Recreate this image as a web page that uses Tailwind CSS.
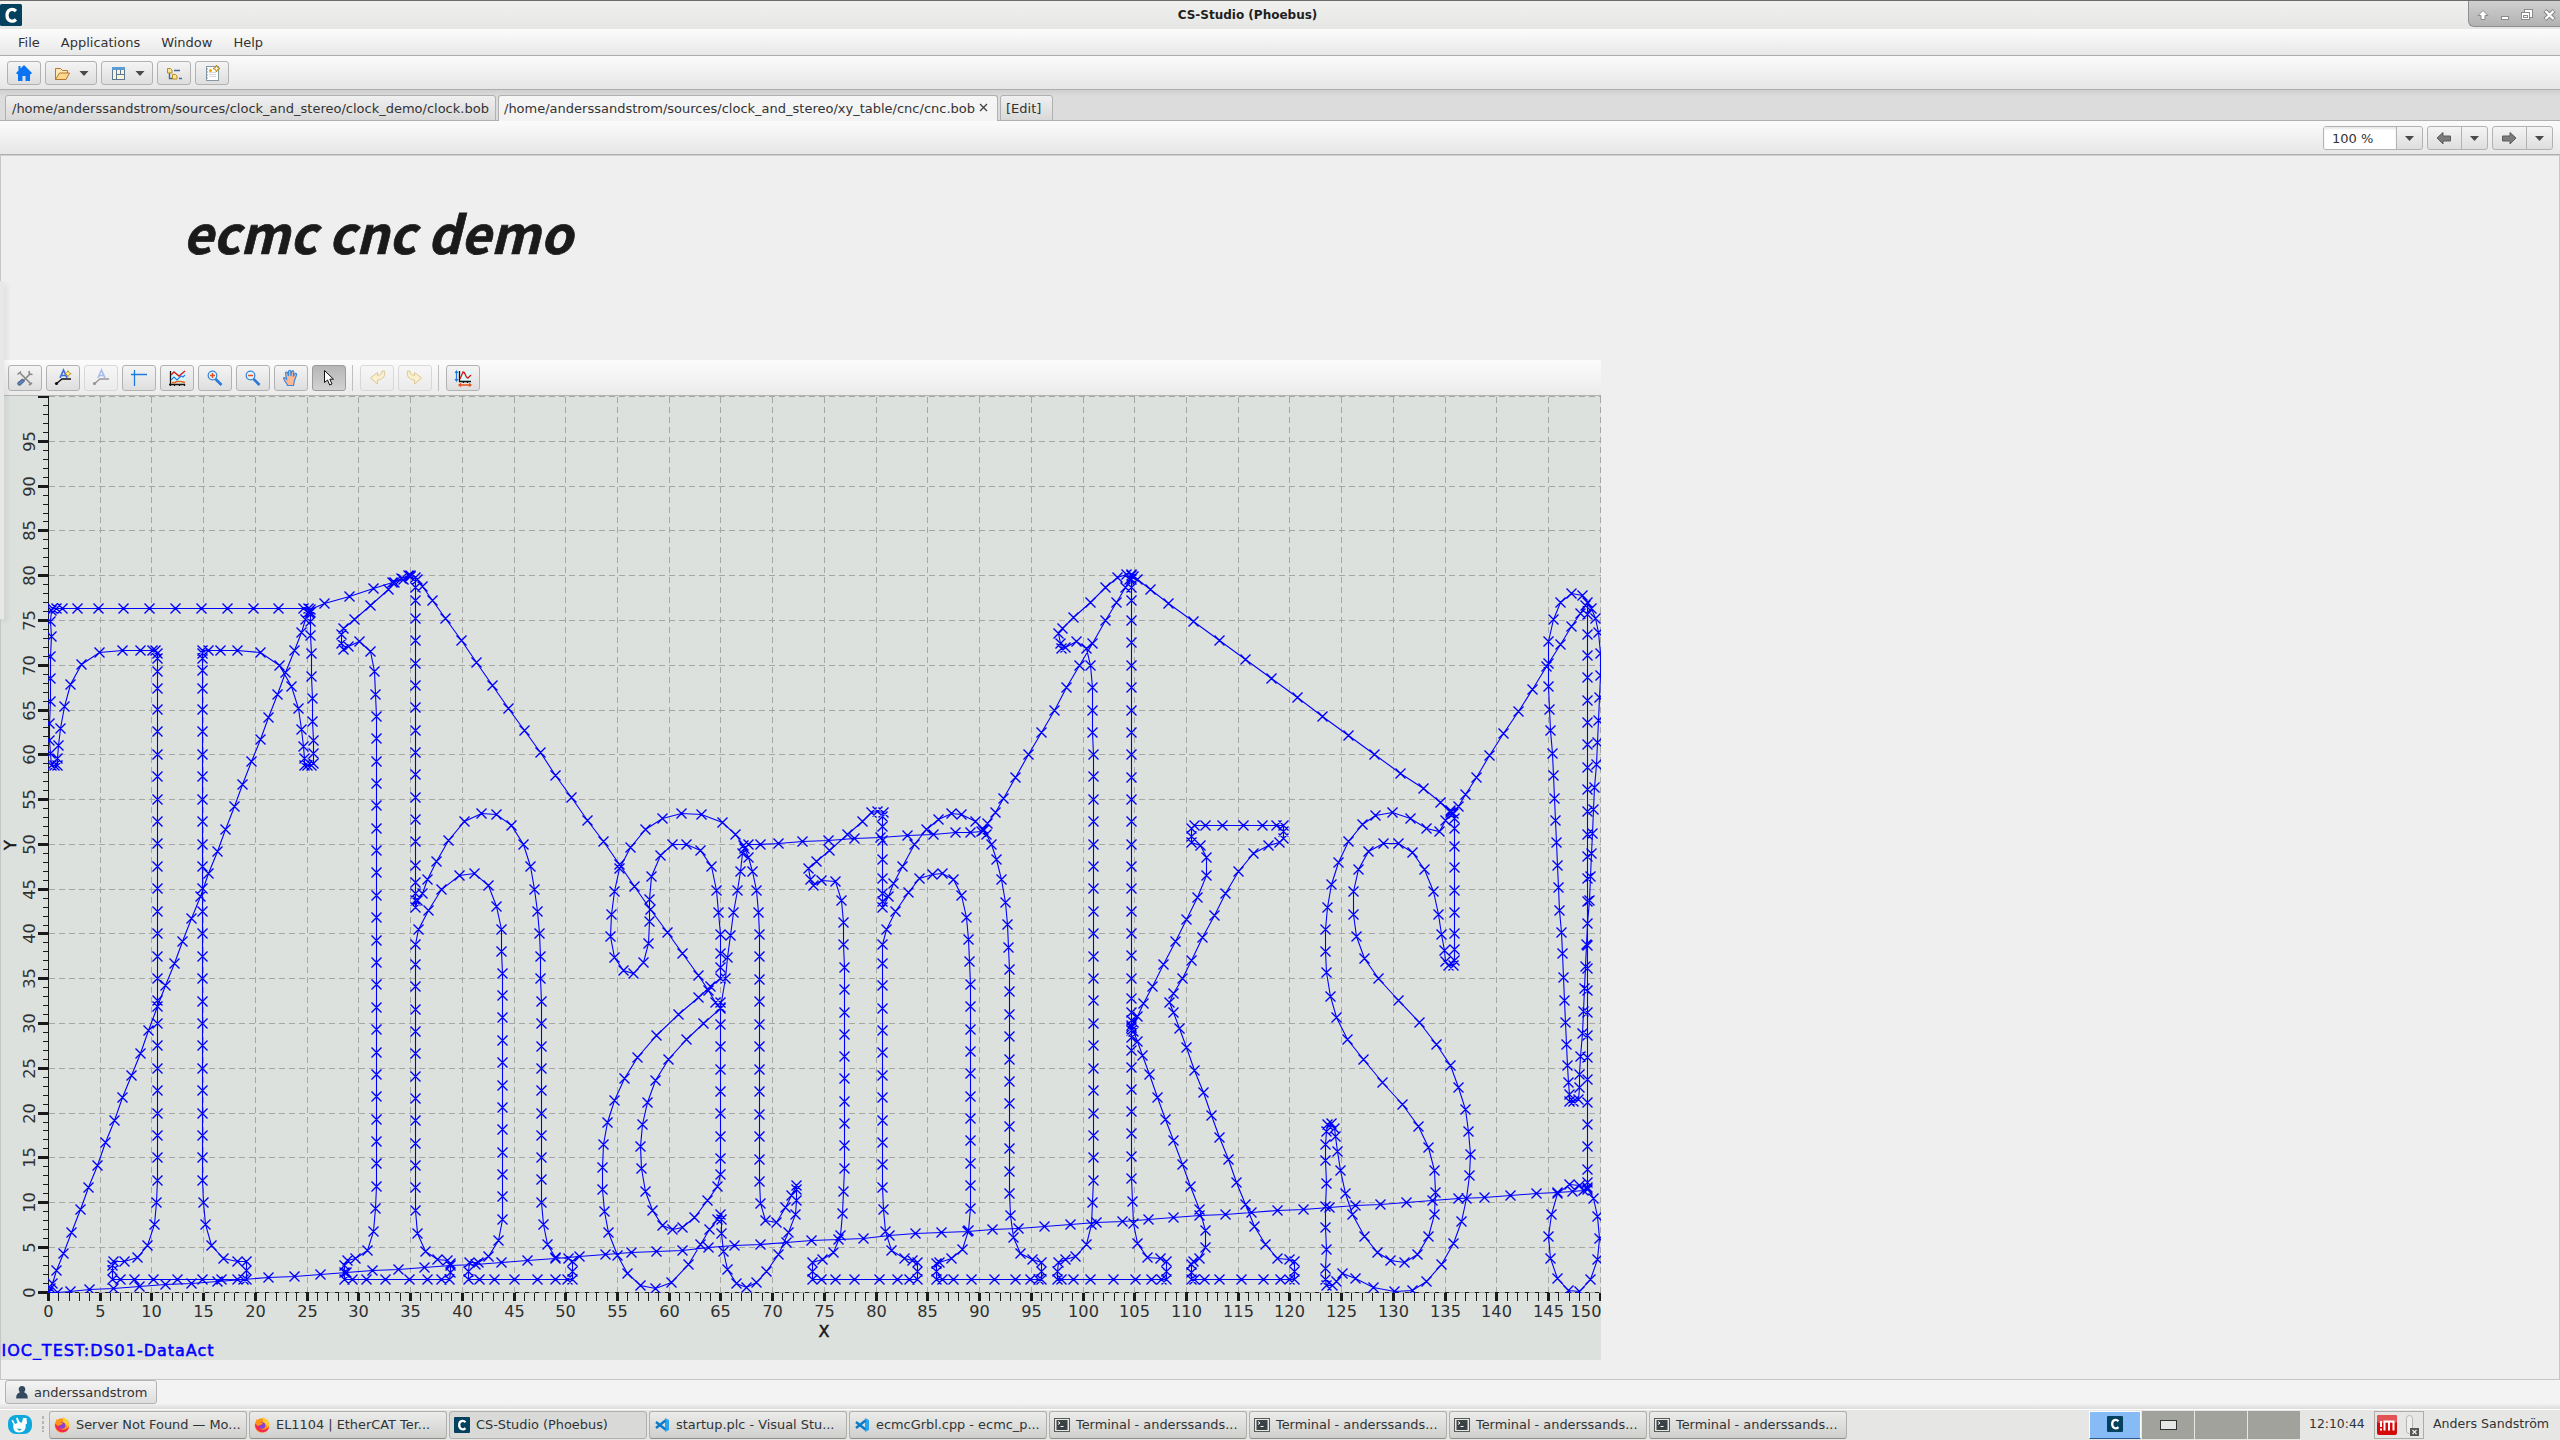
<!DOCTYPE html>
<html lang="en">
<head>
<meta charset="utf-8">
<title>CS-Studio (Phoebus)</title>
<script src="https://cdn.jsdelivr.net/npm/@tailwindcss/browser@4"></script>
</head>
<body class="w-[2560px] h-[1440px] overflow-hidden flex flex-col bg-[#efefef] font-['DejaVu_Sans'] text-[13px] leading-4 text-[#333]">

<!-- window title -->
<header class="h-[29px] shrink-0 border-t border-[#6f6b6b] bg-linear-to-b from-[#f0f0ef] to-[#e6e6e4] flex">
  <div class="w-[22px] pt-[3px]"><svg width="22" height="22"><rect width="22" height="22" rx="1.5" fill="#03415f"/><path d="M16 7.2C12.500 3.600 7 5.500 7 11.300s5.500 7.500 9 4.200" fill="none" stroke="#fff" stroke-width="3.200"/></svg></div>
  <div class="flex-1 text-center font-bold text-[12px] leading-[29px] pl-[5px] text-[#1f1f1f]">CS-Studio (Phoebus)</div>
  <div class="w-[92px] h-[26px] rounded-bl-md border-l border-b border-[#8e8e8e] bg-linear-to-b from-[#d0d0d0] to-[#b2b2b2]">
    <svg width="91" height="26" fill="none" stroke="#8a8a8a"><path d="M14 9.500l5 5h-3v4h-4v-4h-3z" fill="#fff"/><rect x="32.500" y="15.500" width="7" height="3" fill="#fff"/><rect x="55.500" y="8.500" width="8" height="8" fill="#fff"/><rect x="52.500" y="11.500" width="8" height="7" fill="#fff"/><rect x="54.500" y="14.500" width="4" height="2"/><path d="M76 9.500l9 9M85 9.500l-9 9" stroke="#888" stroke-width="4.500"/><path d="M76.500 10l8 8M84.500 10l-8 8" stroke="#fff" stroke-width="2.300"/></svg>
  </div>
</header>

<nav class="h-[27px] shrink-0 border-b border-[#adadad] bg-linear-to-b from-[#fcfcfc] to-[#e8e8e8] flex items-center pl-[18px] pt-[2px] gap-[21px]">
  <span>File</span><span>Applications</span><span>Window</span><span>Help</span>
</nav>

<div class="h-[34px] shrink-0 border-b border-[#adadad] bg-linear-to-b from-[#fbfbfb] to-[#e6e6e6] flex pt-[5px] pl-[7px] gap-1">
  <div class="w-[34px] h-6 rounded-[3px] border border-[#b2b2b2] bg-linear-to-b from-[#f4f4f4] to-[#dedede]"><svg width="32" height="22"><path d="M16 3l8 8-1.500 1.500-.5-.500v7h-4.500v-5h-3v5H10v-7l-.500.500L8 11l2.500-2.500V4h2v2.500z" fill="#0a74f5"/></svg></div>
  <div class="w-[52px] h-6 rounded-[3px] border border-[#b2b2b2] bg-linear-to-b from-[#f4f4f4] to-[#dedede]"><svg width="50" height="22"><path d="M9.500 17.500v-11h5l2 2h5v2.500" fill="#fde9b6" stroke="#b5772b"/><path d="M9.500 17.500l4-6.500h10l-3.500 6.500z" fill="#fbd88d" stroke="#b5772b"/><path d="M33.500 9h9l-4.500 5z" fill="#4a4a4a"/></svg></div>
  <div class="w-[52px] h-6 rounded-[3px] border border-[#b2b2b2] bg-linear-to-b from-[#f4f4f4] to-[#dedede]"><svg width="50" height="22"><rect x="10.500" y="5.500" width="12" height="12" fill="#f8f4da" stroke="#5b7893"/><path d="M10 5h13v3H10z" fill="#5d9bd6"/><path d="M14.500 8v10M14.500 12.500h8M18.500 8v4.500" stroke="#5b7893"/><path d="M33.500 9h9l-4.500 5z" fill="#4a4a4a"/></svg></div>
  <div class="w-[34px] h-6 rounded-[3px] border border-[#b2b2b2] bg-linear-to-b from-[#f4f4f4] to-[#dedede]"><svg width="32" height="22"><path d="M11.500 11v5.500h4M16 8.500h6M21 16.500h3" stroke="#41699c" fill="none" stroke-width="1.400"/><path d="M9.500 6.500h3l1.500 1.500v3h-4.500zM14.500 12.500h3l1.500 1.500v3h-4.500z" fill="#fbe6a0" stroke="#b98b1d"/></svg></div>
  <div class="w-[34px] h-6 rounded-[3px] border border-[#b2b2b2] bg-linear-to-b from-[#f4f4f4] to-[#dedede]"><svg width="32" height="22"><rect x="10.500" y="4.500" width="12" height="14" fill="#fff" stroke="#8598a6"/><path d="M13 10.500h7M13 12.500h7M13 14.500h7" stroke="#cfd8df"/><path d="M10 7h2M10 10h2M10 13h2M10 16h2" stroke="#7b8f9d"/><circle cx="14.500" cy="8.500" r="1.500" fill="#e0a800"/><path d="M20.500 3l1 2.500 2.500 1-2.500 1-1 2.500-1-2.500-2.500-1 2.500-1z" fill="#fff6d0" stroke="#b8860b"/></svg></div>
</div>

<!-- document tabs -->
<div class="h-[31px] shrink-0 bg-linear-to-b from-[#cfcfcf] via-[#dcdcdc] via-20% to-[#dcdcdc] flex items-end pl-[5px] gap-[2px] shadow-[inset_0_-1px_0_#b0b0b0]">
  <div class="w-[491px] h-[26px] rounded-t-[3px] border border-[#b0b0b0] bg-linear-to-b from-[#f0f0f0] to-[#d9d9d9] pl-[6px] pt-[5px] whitespace-nowrap"><span>/home/anderssandstrom/sources/clock_and_stereo/clock_demo/clock.bob</span></div>
  <div class="w-[500px] h-[26px] rounded-t-[3px] border border-b-0 border-[#b0b0b0] bg-linear-to-b from-[#f6f6f6] to-[#f3f3f3] pl-[5px] pt-[5px] whitespace-nowrap flex gap-1"><span>/home/anderssandstrom/sources/clock_and_stereo/xy_table/cnc/cnc.bob</span><svg width="9" height="9" class="mt-[2px]"><path d="M1 1l7 7M8 1l-7 7" stroke="#444" stroke-width="1.400"/></svg></div>
  <div class="w-[53px] h-[26px] rounded-t-[3px] border border-[#b0b0b0] bg-linear-to-b from-[#f0f0f0] to-[#d9d9d9] pl-[5px] pt-[5px]">[Edit]</div>
</div>

<div class="h-[35px] shrink-0 border-b border-[#cfcfcf] bg-linear-to-b from-[#fbfbfb] to-[#e6e6e6] shadow-[inset_0_-1px_0_#b0b0b0] flex justify-end pt-[5px] pr-[7px] gap-1">
  <div class="w-[100px] h-6 rounded-[3px] border border-[#b2b2b2] bg-linear-to-b from-[#f4f4f4] to-[#dedede] flex overflow-hidden"><div class="w-[73px] bg-white border-r border-[#b2b2b2] pl-[8px] pt-[4px] shadow-[inset_0_2px_2px_#e8e8e8]">100 %</div><svg width="25" height="22"><path d="M8 9h9l-4.500 5z" fill="#4a4a4a"/></svg></div>
  <div class="w-[61px] h-6 rounded-[3px] border border-[#b2b2b2] bg-linear-to-b from-[#f4f4f4] to-[#dedede] flex"><svg width="34" height="22" class="border-r border-[#b2b2b2]"><path d="M9 11l6-5.500V9h7.500v5H15v3z" fill="#7b7b7b" stroke="#5c5c5c"/></svg><svg width="25" height="22"><path d="M8 9h9l-4.500 5z" fill="#4a4a4a"/></svg></div>
  <div class="w-[61px] h-6 rounded-[3px] border border-[#b2b2b2] bg-linear-to-b from-[#f4f4f4] to-[#dedede] flex"><svg width="34" height="22" class="border-r border-[#b2b2b2]"><path d="M23 11l-6-5.500V9H9.500v5H17v3z" fill="#7b7b7b" stroke="#5c5c5c"/></svg><svg width="25" height="22"><path d="M8 9h9l-4.500 5z" fill="#4a4a4a"/></svg></div>
</div>

<!-- display -->
<main class="h-[1224px] shrink-0 relative border-l border-r border-b border-[#c6c6c6] bg-[#efefef] flex flex-col">
  <div class="h-[204px] shrink-0 pl-[182px] pt-[34px]"><h1 class="font-['Noto_Sans_CJK_JP'] font-bold italic text-[51.5px] leading-[84px] text-[#1a1a1a] whitespace-nowrap [-webkit-text-stroke:0.7px_#1a1a1a]">ecmc cnc demo</h1></div>
  <div class="w-[1600px] h-[36px] shrink-0 border-b border-[#b4b4b4] bg-linear-to-b from-[#fcfcfc] to-[#ebebeb] flex pt-[5px] pl-[7px] gap-1">
    <div class="w-[34px] h-[26px] rounded-[3px] border border-[#b2b2b2] bg-linear-to-b from-[#f4f4f4] to-[#dedede]"><svg width="32" height="24" fill="none"><path d="M11 7l11 11M21 8L11 18" stroke="#888" stroke-width="1.600"/><path d="M8.500 8.500l3.500-3M20 5l.5 3 3 .500M20 19l3-2" stroke="#888" stroke-width="1.600"/><path d="M13.500 13l2 2-4 4c-2 1-3.500-1-2.500-2.500z" fill="#5b83bd" stroke="#44597a"/></svg></div>
    <div class="w-[34px] h-[26px] rounded-[3px] border border-[#b2b2b2] bg-linear-to-b from-[#f4f4f4] to-[#dedede]"><svg width="32" height="24" fill="none"><path d="M9 18l6-5h9" stroke="#111" stroke-width="1.300"/><circle cx="9.500" cy="17.500" r="1.600" fill="#111"/><path d="M13 12l3.500-8 3.500 8M14.500 9.500h4" stroke="#3c6fe0" stroke-width="1.700"/><path d="M21 4.500l1 2.200 2.200 1-2.200 1-1 2.200-1-2.200-2.200-1 2.200-1z" fill="#fff3b0" stroke="#b8860b" stroke-width=".8"/></svg></div>
    <div class="w-[34px] h-[26px] rounded-[3px] border border-[#d8d8d8] bg-linear-to-b from-[#f7f7f7] to-[#ebebeb]"><svg width="32" height="24" fill="none" opacity=".4"><path d="M9 18l6-5h9" stroke="#111" stroke-width="1.300"/><circle cx="9.500" cy="17.500" r="1.600" fill="#111"/><path d="M13 12l3.500-8 3.500 8M14.500 9.500h4" stroke="#3c6fe0" stroke-width="1.700"/></svg></div>
    <div class="w-[34px] h-[26px] rounded-[3px] border border-[#b2b2b2] bg-linear-to-b from-[#f4f4f4] to-[#dedede]"><svg width="32" height="24" fill="none"><path d="M11.500 4v16M8 8.500h16" stroke="#1c7be0" stroke-width="1.300"/></svg></div>
    <div class="w-[34px] h-[26px] rounded-[3px] border border-[#b2b2b2] bg-linear-to-b from-[#f4f4f4] to-[#dedede]"><svg width="32" height="24" fill="none"><path d="M9 5h15v12H9z" fill="#d8fbfb"/><path d="M9.500 5v15M8 18.500h16M13.500 18v2M18.500 18v2M23.500 18v2" stroke="#111" stroke-width="1.300"/><path d="M10 9l3-3 5 4 6-5" stroke="#e01818" stroke-width="1.400"/><path d="M10 14l3-3 3 3 4-4 2 1 2-2" stroke="#2b78e8" stroke-width="1.200"/><path d="M11 16.500h3l2-1h4l4 1" stroke="#e8601a" stroke-width="1.400"/></svg></div>
    <div class="w-[34px] h-[26px] rounded-[3px] border border-[#b2b2b2] bg-linear-to-b from-[#f4f4f4] to-[#dedede]"><svg width="32" height="24" fill="none"><path d="M16.500 13l6 6" stroke="#2b78d8" stroke-width="2.600"/><circle cx="13.500" cy="9.500" r="4.300" fill="#e3f3ff" stroke="#3a86d8" stroke-width="1.300"/><path d="M11 9.500h5M13.500 7v5" stroke="#e8501a" stroke-width="1.500"/></svg></div>
    <div class="w-[34px] h-[26px] rounded-[3px] border border-[#b2b2b2] bg-linear-to-b from-[#f4f4f4] to-[#dedede]"><svg width="32" height="24" fill="none"><path d="M16.500 13l6 6" stroke="#2b78d8" stroke-width="2.600"/><circle cx="13.500" cy="9.500" r="4.300" fill="#e3f3ff" stroke="#3a86d8" stroke-width="1.300"/><path d="M11 9.500h5" stroke="#e8501a" stroke-width="1.500"/></svg></div>
    <div class="w-[34px] h-[26px] rounded-[3px] border border-[#b2b2b2] bg-linear-to-b from-[#f4f4f4] to-[#dedede]"><svg width="32" height="24"><path d="M12.500 19.500c0-2-3.500-4.500-4-7.500 1-1 2 0 3 1l-1-6c.5-1.300 1.800-1 2.200.2l.8 2.800V5.500c.5-1.500 2-1.500 2.300 0V10l1-4.500c.7-1.300 2-.8 2 .5l-.5 4.500 1.500-2.700c1-1 2-.2 1.800 1l-2.200 6-.9 4.700z" fill="#fbb893" stroke="#3b87de" stroke-width="1.200"/></svg></div>
    <div class="w-[34px] h-[26px] rounded-[3px] border border-[#9c9c9c] bg-linear-to-b from-[#b6b6b6] to-[#d2d2d2]"><svg width="32" height="24"><path d="M11.500 4.500v12l3-2.500 2.200 5 2.300-1-2.200-4.800h3.700z" fill="#fff" stroke="#111"/></svg></div>
    <div class="w-[6px]"><div class="w-px h-[26px] bg-[#c0c0c0] ml-[2px]"></div></div>
    <div class="w-[34px] h-[26px] rounded-[3px] border border-[#d8d8d8] bg-linear-to-b from-[#f7f7f7] to-[#ebebeb]"><svg width="32" height="24"><path d="M23.500 5c1 5-1 8-7 9v4l-7-6 7-5.500v3c3-.3 4.500-1.500 4.500-4.500z" fill="#fbf0cd" stroke="#ddc795"/></svg></div>
    <div class="w-[34px] h-[26px] rounded-[3px] border border-[#d8d8d8] bg-linear-to-b from-[#f7f7f7] to-[#ebebeb]"><svg width="32" height="24"><path d="M8.500 5c-1 5 1 8 7 9v4l7-6-7-5.500v3c-3-.3-4.500-1.500-4.500-4.500z" fill="#fbf0cd" stroke="#ddc795"/></svg></div>
    <div class="w-[6px]"><div class="w-px h-[26px] bg-[#c0c0c0] ml-[2px]"></div></div>
    <div class="w-[34px] h-[26px] rounded-[3px] border border-[#b2b2b2] bg-linear-to-b from-[#f4f4f4] to-[#dedede]"><svg width="32" height="24" fill="none"><path d="M12 5h12v10H12z" fill="#d8fbfb"/><path d="M12.500 5v11M12 15.500h12M16.500 15v2M20.500 15v2" stroke="#111" stroke-width="1.300"/><path d="M13 13l3-7c3 0 2 6 5 6l3-3" stroke="#e01818" stroke-width="1.300"/><path d="M9.500 5v10M8 7l1.500-2L11 7M8 13l1.500 2 1.500-2" stroke="#1c7be0" stroke-width="1.200"/><path d="M12 19h12M14 17.500L12 19l2 1.500M22 17.500l2 1.500-2 1.500" stroke="#e8501a" stroke-width="1.300"/></svg></div>
  </div>
  <svg id="plot" class="block w-[1600px] h-[964px] shrink-0 bg-[#dce1dd] font-['DejaVu_Sans']" viewBox="1 396 1600 964"></svg>
  <div class="absolute -left-px top-[125px] w-[4px] h-[338px] bg-[#e8e8e8] shadow-[3px_3px_5px_rgba(0,0,0,0.08)]"></div>
</main>

<div class="h-[29px] shrink-0 bg-linear-to-b from-[#f3f3f3] from-80% to-[#dcdcdc] pl-[5px]">
  <div class="w-[152px] h-6 rounded-[3px] border border-[#b2b2b2] bg-linear-to-b from-[#f4f4f4] to-[#dedede] flex pl-[9px] pt-[4px] gap-[5px]"><svg width="14" height="16"><path d="M7 1c2.200 0 3.300 1.500 3.300 3.300 0 1.400-.7 2.400-1.300 3 2 .7 3.800 2 3.800 6.200H1.200c0-4.200 1.800-5.500 3.800-6.200-.6-.6-1.300-1.600-1.300-3C3.700 2.500 4.800 1 7 1z" fill="#34495e"/></svg><span>anderssandstrom</span></div>
</div>

<!-- desktop panel -->
<footer class="h-[31px] shrink-0 border-t border-white bg-[#e6e6e4] flex pt-[1px] text-[12.4px] leading-[26px] text-[#2e3436]">
  <div class="w-[49px] flex pl-[8px] pt-[4px] gap-[9px]"><svg width="24" height="19"><rect width="24" height="19" rx="8" fill="#0fa8dc"/><path d="M3.500 5.500l1.500-.5 2 4 2.500-1-1.500-5 1.500-.5 2.500 5h2l1-4.500h3.500l.5 5.500-1.500 1c1 5-2 8-6.500 8s-6.500-3.500-5.500-8z" fill="#fff"/><path d="M8.500 13.500l3 2.500 2.500-2z" fill="#0fa8dc"/></svg><svg width="4" height="18" fill="#b5b5b1"><path d="M1 1h2v3H1zM1 6h2v3H1zM1 11h2v3H1zM1 15h2v2H1z"/></svg></div>
  <div id="tasks" class="flex gap-[2px] w-[2040px] text-[12.9px]"></div>
  <div class="flex gap-px">
    <div class="w-[52px] h-[28px] bg-[#86bbf5] border border-white border-b-[#2c5a94] flex justify-center pt-[4px]"><svg width="16" height="16"><rect width="16" height="16" rx="1" fill="#03415f"/><path d="M11.500 5.200C9 2.700 5.200 4 5.200 8.100s3.800 5.300 6.300 3" fill="none" stroke="#fff" stroke-width="2.300"/></svg></div>
    <div class="w-[52px] h-[28px] bg-[#a2a29d] flex justify-center pt-[9px]"><div class="w-[17px] h-[10px] border border-[#2e3436] bg-[#e6e6e4]"></div></div>
    <div class="w-[52px] h-[28px] bg-[#a2a29d]"></div>
    <div class="w-[52px] h-[28px] bg-[#a2a29d]"></div>
  </div>
  <div class="w-[74px] pl-[9px]">12:10:44</div>
  <div class="w-[50px] h-[28px] border border-[#adada9] flex pl-[2px] pt-[3px] gap-[6px]">
    <svg width="20" height="20"><rect width="20" height="20" rx="2" fill="#d40a0a"/><rect width="20" height="8" rx="2" fill="#e45353"/><path d="M4 6v6M4 13.500v2M7.500 15.500v-9h9v9M12 7v8.500" stroke="#fff" stroke-width="2" fill="none"/></svg>
    <svg width="17" height="22" class="-mt-[1px]"><rect x="3.500" y="1.500" width="6" height="18" rx="3" fill="#eee" stroke="#b5b5b5"/><rect x="7" y="14" width="9" height="8" fill="#555"/><path d="M9.500 16l4 4M13.500 16l-4 4" stroke="#eee" stroke-width="1.300"/></svg>
  </div>
  <div class="pl-[9px] whitespace-nowrap text-[12.6px]">Anders Sandström</div>
</footer>

<script>
// Task list
const ICON = {
  ff: '<svg width="16" height="16"><circle cx="8" cy="8.500" r="7.300" fill="#ff9417"/><path d="M1 7c0 10 14 11 14 2-2 5-9 5-10 0z" fill="#f5264f"/><path d="M9 0c6 3 7 8 5 11-1-4-3-4-5-6z" fill="#ffd12e"/><circle cx="8" cy="8.500" r="3.300" fill="#8a3fd6"/><path d="M2 2l3 3 4 1-2 2-4 1z" fill="#ff9417"/></svg>',
  cs: '<svg width="16" height="16"><rect width="16" height="16" rx="1" fill="#03415f"/><path d="M11.500 5.200C9 2.700 5.200 4 5.200 8.100s3.800 5.300 6.300 3" fill="none" stroke="#fff" stroke-width="2.300"/></svg>',
  vs: '<svg width="16" height="16"><path d="M11 1L15 3v10l-4 2z" fill="#2aa4f0"/><path d="M11.500 3.500L2 11M11.500 12.500L2 5" stroke="#0b7bc9" stroke-width="2.500" fill="none"/></svg>',
  tm: '<svg width="16" height="16"><rect x=".5" y="1.500" width="15" height="13" fill="#e8e8e6" stroke="#555a55"/><rect x="2.500" y="3" width="11" height="10" fill="#3a4245"/><path d="M4 4.500l2 1.500-2 1.500M6.500 9.500h3" stroke="#fff" fill="none"/></svg>'
};
const T = 'Terminal - anderssands...';
document.getElementById('tasks').innerHTML = [
  ['ff', 'Server Not Found — Mo...'], ['ff', 'EL1104 | EtherCAT Ter...'], ['cs', 'CS-Studio (Phoebus)'],
  ['vs', 'startup.plc - Visual Stu...'], ['vs', 'ecmcGrbl.cpp - ecmc_p...'], ['tm', T], ['tm', T], ['tm', T], ['tm', T]
].map(([i, t]) => `<div class="w-[198px] h-[28px] rounded-[3px] border border-[#b0b0ac] ${i === 'cs' ? 'bg-[#d9d9d7]' : 'border-b-[#8f8f8a] bg-linear-to-b from-[#ececea] to-[#cfcfcd]'} flex pl-[4px] gap-[6px] whitespace-nowrap"><div class="pt-[5px]">${ICON[i]}</div><span>${t}</span></div>`).join('');

// Plot
const X = v => Math.round(48 + v * 10.345) + .5, Y = v => Math.round(1291.700 - v * 8.956) + .5;
let s = '';
s += `<path d="M48.500 396.500V1292.500H1601" fill="none" stroke="#1a1a1a"/>`;
for (let v = 0; v <= 150; v++) {
  const x = X(v), m = v % 5 === 0;
  s += `<path d="M${x} 1292V1301" stroke="#1a1a1a" stroke-width="${m ? 3 : 1}"/>`;
  if (m) {
    if (v) s += `<path d="M${x} 397V1292" stroke="#a6a6a4" stroke-dasharray="6 4"/>`;
    s += `<text x="${v === 150 ? 1586 : x}" y="1317" text-anchor="middle" font-size="16.2" fill="#303030">${v}</text>`;
  }
}
for (let v = 0; v <= 100; v++) {
  const y = Y(v), m = v % 5 === 0;
  s += `<path d="M${m ? 38 : 43} ${y}H49" stroke="#1a1a1a" stroke-width="${m ? 3 : 1}"/>`;
  if (m) {
    s += `<path d="M49 ${y}H1601" stroke="#a6a6a4" stroke-dasharray="6 4"/>`;
    if (v < 100) s += `<text transform="translate(34.700 ${y}) rotate(-90)" text-anchor="middle" font-size="16.2" fill="#303030">${v}</text>`;
  }
}
const bold = 'font-size="16" stroke-width=".5"';
s += `<text x="824" y="1337" text-anchor="middle" ${bold} fill="#1a1a1a" stroke="#1a1a1a">X</text>`;
s += `<text transform="translate(15.500 845) rotate(-90)" text-anchor="middle" ${bold} fill="#1a1a1a" stroke="#1a1a1a">Y</text>`;
s += `<text x="1.500" y="1355.500" ${bold} textLength="212" fill="#00f" stroke="#00f">IOC_TEST:DS01-DataAct</text>`;

// Tool path. Each chunk: frame name, then "x,y" samples; "x,y*n" walks there in n equal steps.
const F = { A: [0, 360, 3, 3], B: [0, 790, 3, 3], C: [400, 550, 2.6133, 2.0103], D: [1000, 550, 2.529, 2.0103], E: [0, 1240, 2.8, 3] };
const runs = [
 // T
 `A 155,750 152,785 154,829 152,889 152,955 150,1024 149,1090 148,1142 150,1180 155,1216 163,1216 172,1216 172,1195 176,1157 182,1105 194,1039 211,973 245,913 299,877 368,871 421,871 458,871 466,871 472,880 472,895 472,934 472,985 472,1048
  B 472,1171*21 469,1237 463,1303 443,1366 412,1402 374,1414 340,1414 337,1425 337,1440 337,1468 361,1468 403,1468 460,1468 532,1468 607,1468 664,1468 712,1468 730,1468 740,1468 740,1440 740,1414 712,1414 671,1405 634,1366 617,1303 610,1237 607,1171 607,28*17
  A 607,1048*4 607,985 607,931 607,895 607,880 607,871 625,871 661,871 712,871 781,877 838,916 875,979 896,1045 904,1108 911,1159 913,1195 913,1216 922,1216 935,1216 940,1210 940,1180 940,1141 937,1084 937,1016 934,949 934,880 931,826 931,784 931,757 925,745 911,745 835,745 760,745 682,745 604,745 526,745 448,745 370,745 296,745 232,745 187,745 170,745 158,745`,
 `E 135,157 141,145 148,130 158,90 B 190,1390 214,1327 241,1258 265,1192 292,1126 316,1057 343,991 367,922 394,856 421,790 445,721 472,650 496,586 523,520 547,454 574,385 601,319 625,250 652,184 676,118 703,49
  A 727,1273 754,1204 781,1138 805,1072 832,1003 857,937 883,871 904,817 915,778 925,757 932,748 973,730 1048,709 1120,685 1177,667 1210,657 1231,650`,
 // h
 `A 1246,652 1231,646 1225,645 1205,655 1183,667 1165,688 1111,736 1063,778 1030,805 1024,823 1024,850 1030,868 1045,860 1078,844 1111,874 1123,934 1126,1003 1129,1069
  B 1129,1189*21 1126,1255 1120,1324 1102,1381 1066,1405 1042,1411 1033,1425 1033,1447 1033,1468 1057,1468 1099,1468 1156,1468 1228,1468 1282,1468 1324,1468 1348,1468 1350,1447 1350,1420 1342,1410 1312,1408 1276,1384 1252,1330 1246,1261 1246,523*11 1246,463 1255,418 1285,361 1324,298 1378,256 1423,250 1465,286 1489,349
  C 264,763 265,807 268,851 268,1345*11 257,1388 232,1421 205,1432 182,1432 180,1450 180,1466 209,1466 248,1466 299,1466 359,1466 406,1466 437,1466 451,1466 451,1450 451,1430 440,1424 407,1422 386,1397 374,1356 370,1311 370,908*9 367,861 367,817 365,771 360,727 351,682 341,637 323,593 291,553 253,532 213,529 169,545 126,583 95,626 72,663 58,690 45,705 40,718 40,705 40,690 40,668 40,634 40,587 40,138*10 40,102 40,75 40,55`,
 `C 40,55 45,60 60,73 84,102 120,138 162,182 200,227 242,272 284,318 325,363 367,407 406,453 448,497 490,543 531,587 573,632 613,677 655,722 698,769 739,812 779,855 806,885 825,910 838,920`,
 // a
 `C 838,921 793,952 748,984 702,1024 667,1066 648,1110 634,1155 628,1200 631,1244 641,1289 660,1328 686,1357 713,1367 739,1361 770,1341 803,1307 830,1279 838,1255 838,1223 838,954*6 838,910`,
 `C 838,862 811,877 779,899 728,934 670,975 621,1020 587,1062 561,1107 542,1151 532,1195 529,1241 529,1285 535,1330 545,1373 568,1419 595,1455 629,1478 668,1484 710,1472 754,1437 785,1397 810,1365 829,1345 838,1335 840,1345 840,1375 846,1410 856,1447 880,1474 905,1483 932,1472 958,1451 989,1417 1014,1373 1034,1335 1037,1307 1037,1285 1035,1278 1024,1297 1007,1321 984,1352 954,1348 942,1313 939,1270 939,773*11 937,729 932,685 921,646 910,618 897,595 876,571 842,548 788,532 735,529 686,540 641,562 602,598 574,640 561,686 552,733 550,776 561,819 583,846 611,851 637,830 650,791 652,746 652,703 658,656 682,615 713,592 748,592 784,605 813,637 827,685 833,729 838,773 838,812 838,840 838,862`,
 `C 838,920 850,862 857,819 865,774 872,729 882,685 889,646 895,610 899,600 910,592 943,592 990,590 1052,586 1121,583 1188,579 1256,577 1325,573 1393,571 1451,568 1490,567 1520,566 1525,562 1535,550 1555,527
  D 9,500 40,457 72,412 105,367 138,322 169,276 201,232 233,188 267,142 295,105 317,76 328,60 333,50`,
 // n
 `C 1264,527 1247,525 1233,527 1208,545 1170,572 1123,604 1088,626 1067,640 1072,663 1080,674 1102,664 1137,667 1153,705 1159,749 1159,794 1161,839 1161,1243*9 1159,1290 1156,1333 1150,1379 1134,1413 1105,1426 1077,1433 1077,1450 1077,1466 1102,1466 1137,1466 1189,1466 1253,1466 1300,1466 1332,1466 1352,1466 1352,1450 1352,1432 1340,1428 1318,1424 1285,1408 1270,1371 1263,1326 1261,1281 1261,831*10 1261,793 1272,763 1296,726 1329,688 1357,661 1392,652 1418,650 1447,663 1467,694 1481,739 1486,783 1488,828 1491,873 1491,1323*10 1485,1368 1470,1406 1440,1424 1410,1432 1402,1435 1402,1450 1402,1466 1418,1466 1447,1466 1493,1466 1553,1466
  D 40,1466 77,1466 98,1466 106,1466 106,1450 106,1433 82,1427 52,1415 34,1382 27,1337 24,1294 24,843*10 21,799 19,753 14,709 5,663
  C 1559,622 1546,592 1532,571 1525,564 1505,545 1467,532 1441,529 1408,542 1376,562 1344,593 1313,636 1290,670 1276,697 1262,718 1261,706 1261,690 1261,661 1261,623 1261,583 1261,555 1261,535 1264,527`,
 // k
 `D 333,52 319,50 298,55 268,76 229,105 185,136 158,157 147,167 153,187 155,199 166,196 193,184 219,199 229,232 234,276 234,322 234,367 237,411 237,1267*19 234,1311 231,1355 219,1397 192,1421 165,1427 148,1433 146,1450 146,1466 156,1466 186,1466 229,1466 287,1466 343,1466 383,1466 408,1466 421,1466 421,1450 421,1430 405,1424 374,1422 347,1395 338,1354 335,1310 333,1263 333,1040*5 333,1006 333,980 333,965 333,955 337,968 349,988 361,1016 378,1054 399,1101 418,1144 438,1188 461,1235 482,1279 504,1325 519,1368 519,1403 505,1424 490,1430 484,1437 484,1452 484,1466 493,1466 517,1466 555,1466 611,1466 666,1466 710,1466 733,1466 744,1466 745,1450 745,1430 733,1427 703,1424 671,1397 644,1359 621,1315 598,1271 578,1225 556,1181 535,1137 515,1090 491,1046 472,1000 455,961 440,930 428,910 440,892 461,861 484,825 512,778 543,735 571,690 603,646 641,610 679,595 706,588 717,580 717,565 717,553 700,553 664,553 615,553 563,553 520,553 493,553 484,560 484,575 484,588 508,595 523,619 523,654 499,699 472,743 444,787 414,833 386,877 364,911 347,937 337,950 333,960 333,945 333,930 333,902 333,861 333,142*16 333,102 333,76 333,60 337,53 347,60 380,79 426,107 489,144 555,182 621,220 686,258 752,296 816,335 881,373 947,411 1013,449 1071,480 1114,508 1140,524 1148,529`,
 // s
 `D 1148,529 1140,527 1127,543 1111,565 1078,560 1038,540 992,528 949,534 917,552 881,586 856,628 838,672 828,719 823,763 823,807 825,850 837,898 851,940 879,984 919,1025 967,1071 1018,1115 1059,1159 1083,1201 1099,1247 1101,1292 1099,1336 1083,1380 1057,1416 1022,1432 988,1428 955,1412 921,1380 892,1336 874,1294 862,1247 854,1210 849,1180 845,1162 838,1153 828,1155 825,1168 823,1195 823,1228 825,1274 823,1320 823,1362 825,1406 823,1445 823,1466 825,1478 840,1478 851,1470 867,1454 900,1464 945,1482 998,1491 1042,1488 1078,1470 1117,1436 1147,1394 1167,1350 1180,1304 1188,1258 1190,1215 1185,1169 1177,1125 1159,1080 1139,1036 1105,994 1061,950 1008,906 957,862 922,821 902,776 894,733 894,687 907,643 933,606 971,590 1008,590 1044,608 1074,643 1097,687 1109,733 1117,773 1124,805 1127,827 1135,836 1148,836 1150,825 1150,803 1150,771 1150,729 1150,684 1150,638 1150,596 1150,560 1150,540 1148,529 1160,516 1177,492 1205,457 1239,413 1273,369 1311,325 1347,280 1383,234 1417,189 1445,154 1468,127 1480,112 1486,106`,
 // exclamation mark
 `D 1486,106 1472,91 1446,87 1417,105 1399,140 1387,184 1387,228 1387,275 1389,320 1392,363 1398,409 1400,453 1403,500 1405,544 1408,588 1410,634 1412,678 1415,725 1420,769 1422,812 1425,859 1428,905 1430,950 1433,995 1436,1036 1438,1071 1440,1095 1440,1109 1450,1109 1463,1105 1466,1080 1466,1055 1468,1018 1473,972 1475,928 1478,882 1481,838 1484,794 1486,750 1490,705 1494,657 1496,611 1498,569 1502,522 1504,478 1509,431 1511,387 1514,343 1516,297 1519,253 1519,208 1513,166 1505,137 1495,118 1486,106 1486,130 1486,170 1486,212 1486,1245*23 1486,1272 1486,1285`,
 `D 1486,1282 1466,1277 1440,1275 1410,1293 1396,1336 1386,1380 1392,1424 1410,1465 1437,1488 1465,1490 1493,1466 1512,1427 1517,1384 1511,1340 1500,1304 1486,1282`,
 // travel back to the origin
 `E 135,157 160,157 197,154 250,148 318,145 390,139 463,133 537,130 609,124 683,118 751,112 824,108 898,103 970,97 1043,91 1115,88 1188,82 1260,76 1332,72 1404,67 1476,61 1555,54
  C 470,1421*1 537,1417 604,1413 670,1411 739,1408 806,1403 874,1399 941,1397 1010,1392 1075,1389 1145,1387 1211,1384 1279,1379 1347,1375 1415,1373 1483,1370 1549,1366
  D 47,1364 112,1359 178,1355 245,1352 309,1349 376,1346 438,1342 504,1338 571,1335 636,1332 701,1328 767,1326 834,1322 899,1318 962,1316 1028,1312 1093,1308 1160,1304 1225,1302 1291,1297 1357,1294 1410,1292 1447,1290 1475,1288 1486,1285`
];
const snap = v => Math.floor(v) + .5;
let lines = '', marks = '';
for (const run of runs) {
  let f, prev = null, d = '';
  for (const tok of run.trim().split(/\s+/)) {
    if (F[tok]) { f = F[tok]; continue; }
    const [xy, n] = tok.split('*'), [a, b] = xy.split(',').map(Number);
    const p = [f[0] + a / f[2], f[1] + b / f[3]], k = prev ? +(n || 1) : 1;
    for (let i = 1; i <= k; i++) {
      const x = snap(prev ? prev[0] + (p[0] - prev[0]) * i / k : p[0]), y = snap(prev ? prev[1] + (p[1] - prev[1]) * i / k : p[1]);
      d += (d ? 'L' : 'M') + x + ' ' + y;
      marks += `M${x - 5} ${y - 5}l10 10M${x + 5} ${y - 5}l-10 10`;
    }
    prev = p;
  }
  lines += d;
}
s += `<clipPath id="area"><path d="M48 397H1601V1293H48z"/></clipPath><g clip-path="url(#area)" fill="none" stroke="#00f"><path d="${lines}" stroke-width="1.100"/><path d="${marks}" stroke-width="1.350"/></g>`;
document.getElementById('plot').innerHTML = s;
</script>
</body>
</html>
